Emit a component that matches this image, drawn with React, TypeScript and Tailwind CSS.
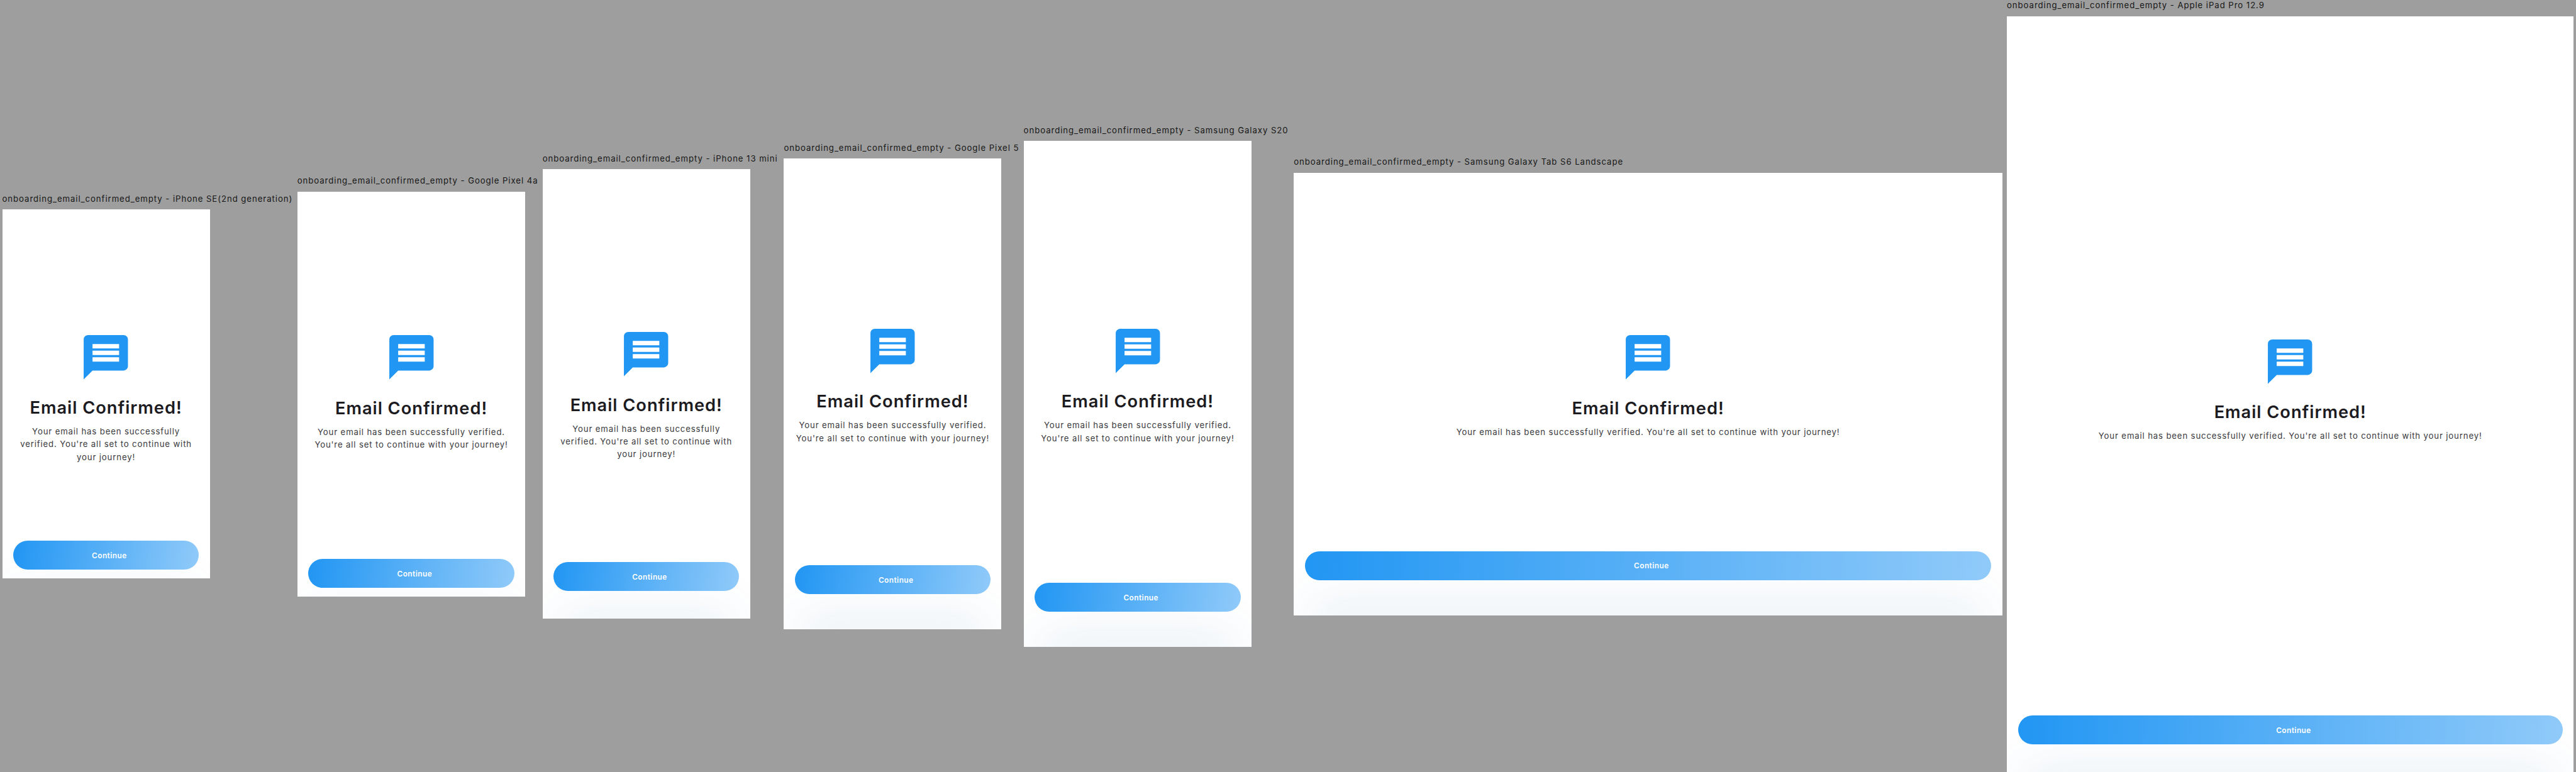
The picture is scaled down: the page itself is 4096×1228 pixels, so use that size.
import { MdMessage } from "react-icons/md";

const FIRST = "Your email has been successfully verified.";
const SECOND = "You're all set to continue with your journey!";
const THREE_LINES = ["Your email has been successfully", "verified. You're all set to continue with", "your journey!"];
const TWO_LINES = [FIRST, SECOND];
const ONE_LINE = [`${FIRST} ${SECOND}`];

type Device = {
  name: string;
  column: string;
  screen: string;
  button: string;
  lines: string[];
};

const DEVICES: Device[] = [
  {
    name: "iPhone SE(2nd generation)",
    column: "w-[533px]",
    screen: "w-[375px] h-[667px] pt-[218.5px] pb-[16px]",
    button: "bg-[linear-gradient(98.8deg,#2196f3,#90caf9)]",
    lines: THREE_LINES,
  },
  {
    name: "Google Pixel 4a",
    column: "w-[443px]",
    screen: "w-[412px] h-[732px] pt-[252px] pb-[16px]",
    button: "bg-[linear-gradient(98deg,#2196f3,#90caf9)]",
    lines: TWO_LINES,
  },
  {
    name: "iPhone 13 mini",
    column: "w-[436px]",
    screen: "w-[375px] h-[812px] pt-[286px] pb-[50px]",
    button: "bg-[linear-gradient(98.8deg,#2196f3,#90caf9)]",
    lines: THREE_LINES,
  },
  {
    name: "Google Pixel 5",
    column: "w-[433px]",
    screen: "w-[393px] h-[851px] pt-[299.5px] pb-[64px]",
    button: "bg-[linear-gradient(98.4deg,#2196f3,#90caf9)]",
    lines: TWO_LINES,
  },
  {
    name: "Samsung Galaxy S20",
    column: "w-[488px]",
    screen: "w-[412px] h-[915px] pt-[331.5px] pb-[64px]",
    button: "bg-[linear-gradient(98deg,#2196f3,#90caf9)]",
    lines: TWO_LINES,
  },
  {
    name: "Samsung Galaxy Tab S6 Landscape",
    column: "w-[1288px]",
    screen: "w-[1280px] h-[800px] pt-[286px] pb-[64px]",
    button: "bg-[linear-gradient(92.4deg,#2196f3,#90caf9)]",
    lines: ONE_LINE,
  },
  {
    name: "Apple iPad Pro 12.9",
    column: "w-[1024px]",
    screen: "w-[1024px] h-[1366px] pt-[576px] pb-[50px]",
    button: "bg-[linear-gradient(93deg,#2196f3,#90caf9)]",
    lines: ONE_LINE,
  },
];

function Screen({ device }: { device: Device }) {
  return (
    <div className={`flex flex-col items-center overflow-hidden bg-white px-[20px] ${device.screen}`}>
      <MdMessage className="size-[96px] shrink-0 text-[#2196f3]" />
      <h1 className="mt-[24px] whitespace-nowrap text-[31px] leading-[40px] font-semibold tracking-[1.1px] text-[#1c1b1f]">
        Email Confirmed!
      </h1>
      <p className="mt-[11px] text-center text-[15px] leading-[23px] tracking-[0.96px] text-[#3a393d]">
        {device.lines.map((line) => (
          <span key={line} className="block whitespace-nowrap">
            {line}
          </span>
        ))}
      </p>
      <button
        className={`mt-auto flex h-[52px] w-full shrink-0 items-center justify-center rounded-full pt-px pl-[12px] text-[13.5px] font-semibold tracking-[0.5px] text-white shadow-[0_95px_90px_rgba(40,105,160,0.13)] ${device.button}`}
      >
        Continue
      </button>
    </div>
  );
}

export default function App() {
  return (
    <div className="h-[1228px] w-[4096px] overflow-hidden bg-[#9e9e9e] font-['Inter',sans-serif]">
      <div className="flex h-[1395px] w-[4653px] items-center pl-[4px] [zoom:0.88029]">
        {DEVICES.map((device) => (
          <section key={device.name} className={`shrink-0 ${device.column}`}>
            <p className="h-[29px] whitespace-nowrap text-[15px] leading-[20px] tracking-[1.06px] text-[#161616]">
              onboarding_email_confirmed_empty - {device.name}
            </p>
            <Screen device={device} />
          </section>
        ))}
      </div>
    </div>
  );
}
